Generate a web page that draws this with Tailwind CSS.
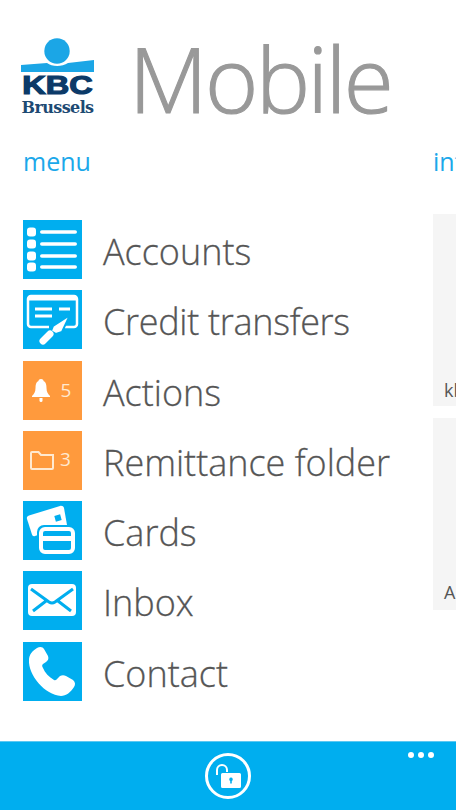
<!DOCTYPE html>
<html lang="en">

<head>
    <meta charset="UTF-8">
    <meta name="viewport" content="width=device-width, initial-scale=1.0">
    <title>KBC Brussels Mobile</title>
    <script src="https://cdn.jsdelivr.net/npm/@tailwindcss/browser@4"></script>
</head>

<body class="bg-white overflow-hidden font-['Open_Sans',sans-serif]">

    <div class="w-[456px] h-[810px] flex flex-col overflow-hidden">

        <!-- Header -->
        <header class="h-[140px] flex items-start pl-[21px] shrink-0">
            <div class="w-[73px] mt-[38px] flex flex-col items-center">
                <svg width="73" height="34" viewBox="0 0 73 34">
                    <circle cx="36" cy="13" r="12.700" fill="#1ba6e6" />
                    <path d="M0 27 L26 25 C31 29 41 29 47 25 L73 22 V34 H0 Z" fill="#1ba6e6" />
                </svg>
                <div class="mt-[4px] w-[73px] h-[18px] leading-[18px] text-center text-[25px] font-bold text-[#0b3a68] font-['Liberation_Sans',sans-serif] scale-x-[1.3] [-webkit-text-stroke:1.2px_#0b3a68]">KBC</div>
                <div class="mt-[5px] text-[16px] leading-[18px] font-bold text-[#1d4a73] font-['DejaVu_Serif',serif] tracking-[-0.6px]">Brussels</div>
            </div>
            <h1 class="ml-[35px] mt-[21px] text-[91px] leading-[114px] font-light text-[#999] tracking-[-2.500px] [-webkit-text-stroke:1.200px_#999]">Mobile</h1>
        </header>

        <!-- Pivot -->
        <main class="flex-1 flex overflow-hidden">
            <section class="w-[433px] shrink-0 pl-[23px]">
                <h2 class="text-[25px] leading-[42px] text-[#1ba8ea]">menu</h2>
                <ul class="mt-[38px] flex flex-col gap-[11.300px]">
                    <li class="h-[59px] flex items-center gap-[21px]">
                        <div class="w-[59px] h-[59px] bg-[#00aeef]">
                            <svg width="59" height="59" viewBox="0 0 59 59" fill="#fff">
                                <rect x="4" y="7.500" width="9" height="9" rx="3" />
                                <rect x="4" y="19.500" width="9" height="9" rx="3" />
                                <rect x="4" y="31.500" width="9" height="9" rx="3" />
                                <rect x="4" y="42.500" width="9" height="9" rx="3" />
                                <rect x="17" y="10.200" width="37" height="3.600" rx="1.800" />
                                <rect x="17" y="22.200" width="37" height="3.600" rx="1.800" />
                                <rect x="17" y="34.200" width="37" height="3.600" rx="1.800" />
                                <rect x="17" y="45.200" width="37" height="3.600" rx="1.800" />
                            </svg>
                        </div>
                        <span class="pt-[4px] text-[36px] leading-[53px] font-light text-[#555] [-webkit-text-stroke:0.300px_#555]">Accounts</span>
                    </li>
                    <li class="h-[59px] flex items-center gap-[21px]">
                        <div class="w-[59px] h-[59px] bg-[#00aeef]">
                            <svg width="59" height="59" viewBox="0 0 59 59" fill="none" stroke="#fff">
                                <path d="M26 37 H8 a3 3 0 0 1 -3 -3 V9 a3 3 0 0 1 3 -3 H51 a3 3 0 0 1 3 3 V34 a3 3 0 0 1 -3 3 H42" stroke-width="2.500" />
                                <path d="M5 8.500 H54" stroke-width="4" />
                                <path d="M12 19 H29 M12 26 H29 M36 19 H47" stroke-width="3" />
                                <path d="M30 36 L47 25 L39 42 L33 44 L28 41 Z" fill="#fff" stroke="#00aeef" stroke-width="2" />
                                <path d="M27 44 L20 51" stroke-width="7" stroke-linecap="round" />
                            </svg>
                        </div>
                        <span class="pt-[4px] text-[36px] leading-[53px] font-light text-[#555] tracking-[-0.300px] [-webkit-text-stroke:0.300px_#555]">Credit transfers</span>
                    </li>
                    <li class="h-[59px] flex items-center gap-[21px]">
                        <div class="w-[59px] h-[59px] bg-[#ff9a3d] flex items-center justify-center gap-[11px] pr-[2px]">
                            <svg width="18" height="23" viewBox="0 0 18 23" fill="#fff">
                                <path d="M9 0 C11 0 11.500 1 11.500 2 C14 3 14.500 6 14.500 9 C14.500 13 16 15 18 17 V18 H0 V17 C2 15 3.500 13 3.500 9 C3.500 6 4 3 6.500 2 C6.500 1 7 0 9 0 Z" />
                                <path d="M7.500 19 H10.500 V21.500 A1.500 1.500 0 0 1 7.500 21.500 Z" />
                            </svg>
                            <span class="text-[19px] leading-[20px] text-[#ffe9d0]">5</span>
                        </div>
                        <span class="pt-[4px] text-[36px] leading-[53px] font-light text-[#555] [-webkit-text-stroke:0.300px_#555]">Actions</span>
                    </li>
                    <li class="h-[59px] flex items-center gap-[21px]">
                        <div class="w-[59px] h-[59px] bg-[#ff9a3d] flex items-center justify-center gap-[6px] pr-[4px]">
                            <svg width="24" height="20" viewBox="0 0 24 20" fill="none" stroke="#ffe9d0" stroke-width="2">
                                <path d="M1 18 a1 1 0 0 0 1 1 H22 a1 1 0 0 0 1 -1 V5 H11 L8.500 2 H2 a1 1 0 0 0 -1 1 Z" />
                            </svg>
                            <span class="text-[19px] leading-[20px] text-[#ffe9d0] -mt-[2px]">3</span>
                        </div>
                        <span class="pt-[4px] text-[36px] leading-[53px] font-light text-[#555] [-webkit-text-stroke:0.300px_#555]">Remittance folder</span>
                    </li>
                    <li class="h-[59px] flex items-center gap-[21px]">
                        <div class="w-[59px] h-[59px] bg-[#00aeef]">
                            <svg width="59" height="59" viewBox="0 0 59 59">
                                <path d="M4 18 C3.500 16 4.500 15 6 14.500 L37 5 C39 4.500 40.500 5.500 41 7 L44 24 L12 35 C10.500 35.500 9.500 35 9 33.500 Z" fill="#fff" />
                                <rect x="32" y="14" width="6" height="6" transform="rotate(-15 35 17)" fill="#00aeef" />
                                <rect x="15" y="25" width="38" height="29" rx="6" fill="#00aeef" stroke="#00aeef" stroke-width="2" />
                                <rect x="18" y="28" width="32" height="23" rx="4" fill="#00aeef" stroke="#fff" stroke-width="4" />
                                <rect x="17" y="35" width="34" height="5" fill="#fff" />
                            </svg>
                        </div>
                        <span class="pt-[4px] text-[36px] leading-[53px] font-light text-[#555] [-webkit-text-stroke:0.300px_#555]">Cards</span>
                    </li>
                    <li class="h-[59px] flex items-center gap-[21px]">
                        <div class="w-[59px] h-[59px] bg-[#00aeef]">
                            <svg width="59" height="59" viewBox="0 0 59 59">
                                <rect x="5" y="13" width="48" height="32" rx="4" fill="#fff" />
                                <path d="M8 18 L26 31 Q29 33 32 31 L50 18 M10 40 L23 30 M48 40 L35 30" fill="none" stroke="#00aeef" stroke-width="3" />
                            </svg>
                        </div>
                        <span class="pt-[4px] text-[36px] leading-[53px] font-light text-[#555] [-webkit-text-stroke:0.300px_#555]">Inbox</span>
                    </li>
                    <li class="h-[59px] flex items-center gap-[21px]">
                        <div class="w-[59px] h-[59px] bg-[#00aeef]">
                            <svg width="59" height="59" viewBox="0 0 59 59" fill="#fff">
                                <path d="M14 6 C17 4 20 5 21 7 L25 14 C26 17 25 18 23 20 L20 22 C19 23 19 24 19.500 25 C22 31 26 35 31 38 C32.500 38.500 33.500 38 34 37 L37 34 C39 33 41 33 43 34 L50 38 C52.500 40 52.500 43 51 45 C48 50 43 54 38 54 C22 53 5 33 6 18 C6 13 9 9 14 6 Z" />
                            </svg>
                        </div>
                        <span class="pt-[4px] text-[36px] leading-[53px] font-light text-[#555] [-webkit-text-stroke:0.300px_#555]">Contact</span>
                    </li>
                </ul>
            </section>

            <section class="flex-1 min-w-0 overflow-hidden">
                <h2 class="text-[25px] leading-[42px] text-[#1ba8ea] whitespace-nowrap">information</h2>
                <div class="mt-[32px] flex flex-col gap-[12px]">
                    <div class="w-[300px] h-[192px] bg-[#f5f5f5] flex items-end pl-[11px] pb-[4px]">
                        <span class="text-[18px] leading-[24px] text-[#555]">kbc.be</span>
                    </div>
                    <div class="w-[300px] h-[192px] bg-[#f5f5f5] flex items-end pl-[11px] pb-[6px]">
                        <span class="text-[18px] leading-[24px] text-[#555]">About</span>
                    </div>
                </div>
            </section>
        </main>

        <!-- App bar -->
        <footer class="h-[69px] shrink-0 bg-[#00aeef] border-t border-[#5cc8f2] flex items-start justify-between">
            <div class="w-[46px] h-[46px] ml-[205px] mt-[11px] rounded-full border-[3px] border-white flex items-center justify-center">
                <svg width="30" height="30" viewBox="0 0 30 30" fill="#fff">
                    <path d="M4 14 V9 A5 5 0 0 1 14 9 V11" fill="none" stroke="#fff" stroke-width="2" />
                    <path fill-rule="evenodd" d="M9.500 12 H26.500 a1.500 1.500 0 0 1 1.500 1.500 V25.500 a1.500 1.500 0 0 1 -1.500 1.500 H9.500 a1.500 1.500 0 0 1 -1.500 -1.500 V13.500 A1.500 1.500 0 0 1 9.500 12 Z M18 16.500 a1.800 1.800 0 0 0 -0.800 3.400 V22.500 H18.800 V19.900 A1.800 1.800 0 0 0 18 16.500 Z" />
                </svg>
            </div>
            <div class="mr-[22px] mt-[10px] flex gap-[4px]">
                <span class="w-[6px] h-[6px] rounded-full bg-white"></span>
                <span class="w-[6px] h-[6px] rounded-full bg-white"></span>
                <span class="w-[6px] h-[6px] rounded-full bg-white"></span>
            </div>
        </footer>
    </div>

</body>

</html>
